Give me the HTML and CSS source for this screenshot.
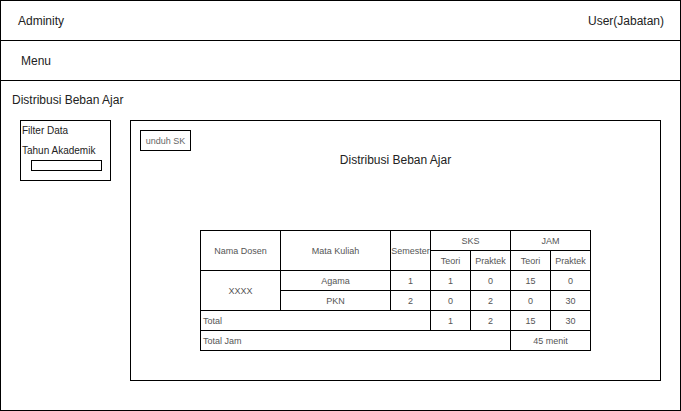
FILE: index.html
```html
<!DOCTYPE html>
<html>
<head>
<meta charset="utf-8">
<link rel="stylesheet" href="styles.css">
</head>
<body>
<div class="frame">
  <header class="topbar">
    <span class="brand">Adminity</span>
    <span class="user">User(Jabatan)</span>
  </header>
  <nav class="menubar">Menu</nav>
  <main class="content">
    <h1 class="page-title">Distribusi Beban Ajar</h1>
    <div class="panels">
      <section class="filter">
        <div class="filter-label">Filter Data</div>
        <div class="filter-label second">Tahun Akademik</div>
        <div class="filter-input"></div>
      </section>
      <section class="report">
        <div class="btn-download">unduh SK</div>
        <h2 class="report-title">Distribusi Beban Ajar</h2>
        <table class="load-table">
          <colgroup>
            <col class="c-dosen"><col class="c-mk"><col class="c-sm">
            <col class="c-sm"><col class="c-sm"><col class="c-sm"><col class="c-sm">
          </colgroup>
          <tr>
            <th rowspan="2">Nama Dosen</th>
            <th rowspan="2">Mata Kuliah</th>
            <th rowspan="2">Semester</th>
            <th colspan="2">SKS</th>
            <th colspan="2">JAM</th>
          </tr>
          <tr>
            <th>Teori</th><th>Praktek</th><th>Teori</th><th>Praktek</th>
          </tr>
          <tr>
            <td rowspan="2">XXXX</td>
            <td>Agama</td><td>1</td><td>1</td><td>0</td><td>15</td><td>0</td>
          </tr>
          <tr>
            <td>PKN</td><td>2</td><td>0</td><td>2</td><td>0</td><td>30</td>
          </tr>
          <tr>
            <td colspan="3" class="left">Total</td><td>1</td><td>2</td><td>15</td><td>30</td>
          </tr>
          <tr>
            <td colspan="5" class="left">Total Jam</td><td colspan="2">45 menit</td>
          </tr>
        </table>
      </section>
    </div>
  </main>
</div>
</body>
</html>
```
FILE: styles.css
```css
* { box-sizing: border-box; }
html, body { margin: 0; padding: 0; background: #fff; }
body { font-family: "Liberation Sans", Arial, sans-serif; color: #222; }

.frame {
  width: 681px;
  height: 411px;
  border: 1px solid #000;
  display: flex;
  flex-direction: column;
}

.topbar {
  height: 40px;
  border-bottom: 1px solid #000;
  display: flex;
  align-items: center;
  justify-content: space-between;
  padding: 0 16px 0 17px;
  font-size: 12px;
}

.menubar {
  height: 40px;
  border-bottom: 1px solid #000;
  display: flex;
  align-items: center;
  padding-left: 20px;
  font-size: 12px;
}

.content { padding: 12px 0 0 11px; }

.page-title {
  margin: 0;
  font-size: 12px;
  font-weight: normal;
  line-height: 14px;
}

.panels {
  display: flex;
  align-items: flex-start;
  gap: 19px;
  margin-top: 13px;
  margin-left: 8px;
}

.filter {
  width: 91px;
  height: 61px;
  border: 1px solid #000;
  padding-left: 1px;
  font-size: 10px;
}
.filter-label { line-height: 20px; }
.filter-label.second { line-height: 19px; }
.filter-input {
  width: 71px;
  height: 11px;
  margin-left: 9px;
  border: 1px solid #000;
}

.report {
  width: 531px;
  height: 261px;
  border: 1px solid #000;
  padding: 9px 0 0 9px;
}

.btn-download {
  width: 51px;
  height: 21px;
  border: 1px solid #000;
  font-size: 9px;
  color: #666;
  display: flex;
  align-items: center;
  justify-content: center;
}

.report-title {
  margin: 2px 0 0 -9px;
  font-size: 12px;
  font-weight: normal;
  line-height: 14px;
  text-align: center;
  color: #222;
}

.load-table {
  margin: 63px 0 0 60px;
  border-collapse: collapse;
  table-layout: fixed;
  width: 391px;
  font-size: 9px;
  color: #555;
}
.c-dosen { width: 80px; }
.c-mk { width: 110px; }
.c-sm { width: 40px; }
.load-table th, .load-table td {
  border: 1px solid #000;
  padding: 0;
  height: 20px;
  font-weight: normal;
  text-align: center;
  white-space: nowrap;
}
.load-table .left { text-align: left; padding-left: 2px; }
```
